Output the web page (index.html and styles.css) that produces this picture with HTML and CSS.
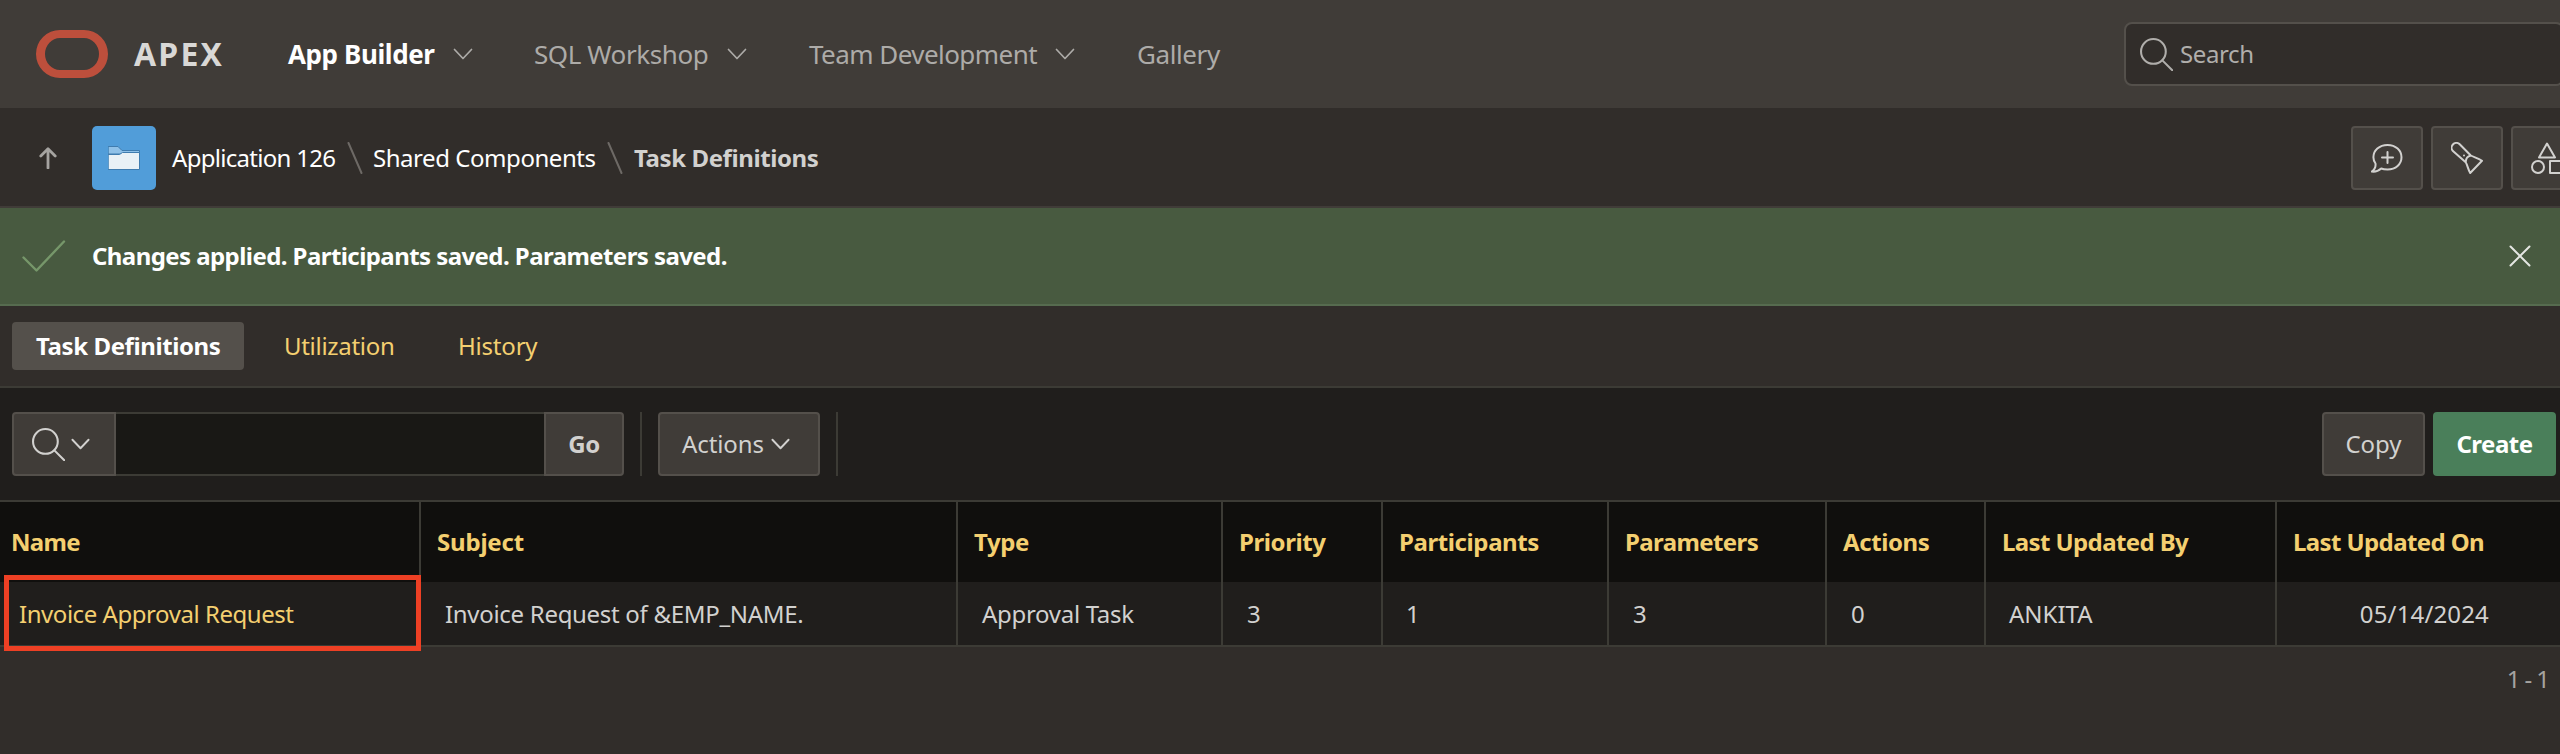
FILE: index.html
```
<!DOCTYPE html>
<html lang="en">
<head>
<meta charset="utf-8">
<title>Task Definitions</title>
<link rel="stylesheet" href="styles.css">
</head>
<body>
<header class="header">
  <div class="logo"></div>
  <div class="brand">APEX</div>
  <nav class="nav">
    <a class="nav-item nav-app current">App Builder <svg class="chev" viewBox="0 0 20 12"><path d="M1.5 1.5 10 10.5 18.5 1.5"/></svg></a>
    <a class="nav-item nav-sql">SQL Workshop <svg class="chev" viewBox="0 0 20 12"><path d="M1.5 1.5 10 10.5 18.5 1.5"/></svg></a>
    <a class="nav-item nav-team">Team Development <svg class="chev" viewBox="0 0 20 12"><path d="M1.5 1.5 10 10.5 18.5 1.5"/></svg></a>
    <a class="nav-item">Gallery</a>
  </nav>
  <div class="search">
    <svg class="magnifier" viewBox="0 0 32 32"><circle cx="13" cy="13" r="12"/><path d="M21.7 21.7 31.3 31.3"/></svg>
    <span>Search</span>
  </div>
</header>

<div class="crumbs">
  <svg class="up" viewBox="0 0 18 22"><path d="M9 21V2M1.8 9 9 1.8 16.2 9"/></svg>
  <div class="tile">
    <svg class="folder" viewBox="0 0 32 24"><path class="folder-back" d="M.5.5H10L14 4.500H31.500V8H.5Z"/><path class="folder-front" d="M.5 8.500H11.500L14.500 6.500H31.500V23.500H.5Z"/></svg>
  </div>
  <a class="crumb crumb-app">Application 126</a>
  <svg class="slash" viewBox="0 0 16 32"><path d="M1.500 1 14.500 31"/></svg>
  <a class="crumb crumb-shared">Shared Components</a>
  <svg class="slash" viewBox="0 0 16 32"><path d="M1.500 1 14.500 31"/></svg>
  <b class="crumb crumb-last">Task Definitions</b>
  <div class="tools">
    <button class="tool"><svg viewBox="0 0 32 32"><path d="M16.500 3C24.800 3 30.500 8.500 30.500 15.300S24.800 27.500 16.500 27.500C14 27.500 12 27.200 10.200 26.500 7.500 29 4 30 .8 29.600 3.800 27.500 5 25.500 4.500 21.500 3 19.500 2.400 17.500 2.400 15.300 2.400 8.500 8.200 3 16.500 3ZM16.500 10V21M11 15.500H22"/></svg></button>
    <button class="tool"><svg viewBox="0 0 32 32"><path d="M2.200 9.300A4.200 4.200 0 0 1 8.700 2.200L19.800 13.500C23 15.300 27 16 31 18.800L19.200 31C17 27.500 16.500 23 14.700 20.300ZM14.700 20.300C14.800 16.500 16 14.200 19.800 13.500"/><circle class="dot" cx="13" cy="13.500" r="1"/></svg></button>
    <button class="tool"><svg viewBox="0 0 32 32"><path d="M16 1.500 24 15.500H8ZM19 19H32V31H19Z"/><circle cx="7" cy="25" r="6"/></svg></button>
  </div>
</div>

<div class="alert">
  <svg class="check" viewBox="0 0 44 32"><path d="M1.500 17.500 14.500 30.500 42 1.500"/></svg>
  <span class="alert-text">Changes applied. Participants saved. Parameters saved.</span>
  <svg class="close" viewBox="0 0 22 22"><path d="M1.500 1.500 20.500 20.500M20.500 1.500 1.500 20.500"/></svg>
</div>

<div class="tabs">
  <a class="tab active">Task Definitions</a>
  <a class="tab tab-util">Utilization</a>
  <a class="tab tab-history">History</a>
</div>

<div class="toolbar">
  <button class="btn find"><svg class="magnifier" viewBox="0 0 32 32"><circle cx="13" cy="13" r="12"/><path d="M21.700 21.700 31.300 31.300"/></svg><svg class="chev" viewBox="0 0 20 12"><path d="M1.500 1.500 10 10.500 18.500 1.500"/></svg></button>
  <input class="field" type="text" aria-label="Search rows">
  <button class="btn go">Go</button>
  <i class="divider"></i>
  <button class="btn actions">Actions<svg class="chev" viewBox="0 0 20 12"><path d="M1.500 1.500 10 10.500 18.500 1.500"/></svg></button>
  <i class="divider"></i>
  <button class="btn copy">Copy</button>
  <button class="btn create">Create</button>
</div>

<div class="grid head">
  <div class="cell">Name</div><div class="cell wide">Subject</div><div class="cell">Type</div><div class="cell">Priority</div><div class="cell">Participants</div><div class="cell tight">Parameters</div><div class="cell">Actions</div><div class="cell tight">Last Updated By</div><div class="cell tight">Last Updated On</div>
</div>
<div class="grid row">
  <div class="cell link">Invoice Approval Request<span class="marker"></span></div><div class="cell">Invoice Request of &amp;EMP_NAME.</div><div class="cell">Approval Task</div><div class="cell">3</div><div class="cell digit">1</div><div class="cell">3</div><div class="cell">0</div><div class="cell wide">ANKITA</div><div class="cell date">05/14/2024</div>
</div>
<div class="pager">1 - 1</div>
</body>
</html>
```
FILE: styles.css
```
* { box-sizing: border-box; }

body {
  margin: 0;
  width: 2560px;
  height: 754px;
  overflow: hidden;
  background: #312d2a;
  color: #d2d1cf;
  font: 24px/32px "Noto Sans", sans-serif;
  letter-spacing: -0.4px;
  white-space: nowrap;
}

svg {
  display: block;
  flex: none;
  fill: none;
  stroke: currentColor;
  stroke-width: 2;
  stroke-linecap: round;
  stroke-linejoin: round;
}

button, input {
  margin: 0;
  padding: 0;
  border: 0;
  font: inherit;
  letter-spacing: inherit;
  color: inherit;
}

/* Header */
.header {
  display: flex;
  align-items: center;
  height: 108px;
  padding-left: 36px;
  background: #403c38;
  overflow: hidden;
}
.logo {
  width: 72px;
  height: 48px;
  border: 8px solid #bd4f3c;
  border-left-width: 9px;
  border-right-width: 9px;
  border-radius: 24px;
}
.brand {
  width: 154px;
  margin-left: 26px;
  font-size: 32px;
  font-weight: 700;
  letter-spacing: 2.2px;
  color: #d9d8d6;
}
.nav { display: flex; font-size: 26px; color: #adaba8; }
.nav-item { display: flex; align-items: center; justify-content: space-between; letter-spacing: -0.4px; }
.chev { width: 20px; height: 12px; }
.nav .chev { color: #adaba8; stroke-width: 1.7; }
.nav-app { width: 185px; margin-right: 61px; }
.nav-sql { width: 213px; margin-right: 62px; }
.nav-team { width: 266px; margin-right: 62px; letter-spacing: -0.55px; }
.current { font-weight: 700; color: #fff; }
.search {
  display: flex;
  align-items: center;
  flex: none;
  gap: 7px;
  width: 440px;
  height: 64px;
  margin-left: auto;
  margin-right: -4px;
  padding-left: 14px;
  border: 2px solid #54504b;
  border-radius: 8px;
  background: #312d2a;
  color: #b0aeab;
  letter-spacing: -0.4px;
}
.magnifier { width: 33px; height: 33px; }

/* Breadcrumb */
.crumbs {
  display: flex;
  align-items: center;
  height: 100px;
  padding: 2px 0 0 39px;
  border-bottom: 2px solid #403c38;
  overflow: hidden;
}
.up { width: 18px; height: 22px; color: #a5a3a0; stroke-width: 2.8; }
.tile {
  display: flex;
  align-items: center;
  justify-content: center;
  width: 64px;
  height: 64px;
  margin: 0 16px 0 35px;
  border-radius: 5px;
  background: #519dd9;
}
.folder { width: 32px; height: 24px; stroke: #3f7caf; stroke-width: 1; stroke-linejoin: miter; }
.folder-back { fill: #8fc1e8; }
.folder-front { fill: #e9f1f6; }
.crumb { color: #fff; }
.crumb-app { width: 175px; letter-spacing: -0.7px; }
.crumb-shared { width: 234px; margin-left: 10px; letter-spacing: -0.45px; }
.crumb-last { margin-left: 11px; color: #d2d1cf; }
.slash { width: 16px; height: 32px; color: #6d6965; }
.tools { display: flex; gap: 8px; margin-left: auto; margin-right: -23px; }
.tool {
  display: flex;
  align-items: center;
  justify-content: center;
  width: 72px;
  height: 64px;
  border: 2px solid #54504b;
  border-radius: 4px;
  background: #403c38;
}
.tool svg { width: 32px; height: 32px; }
.dot { fill: currentColor; stroke: none; }

/* Success message */
.alert {
  display: flex;
  align-items: center;
  height: 98px;
  padding: 0 29px 0 22px;
  border-bottom: 2px solid #566b4f;
  background: #485a40;
}
.check { width: 44px; height: 32px; color: #76976a; stroke-width: 2.4; }
.alert-text { margin-left: 26px; font-weight: 700; color: #fff; letter-spacing: -0.57px; }
.close { width: 22px; height: 22px; margin-left: auto; color: #e4e6e2; }

/* Tabs */
.tabs {
  display: flex;
  align-items: center;
  height: 82px;
  padding-left: 12px;
  border-bottom: 2px solid #3c3b35;
  color: #f4cf70;
}
.tab { line-height: 48px; }
.active { width: 232px; margin-right: 40px; padding-left: 24px; border-radius: 4px; background: #54504b; color: #fff; font-weight: 700; }
.tab-util { width: 174px; letter-spacing: -0.3px; }
.tab-history { letter-spacing: -0.2px; }

/* Report toolbar */
.toolbar {
  display: flex;
  align-items: center;
  height: 114px;
  padding: 0 4px 0 12px;
  border-bottom: 2px solid #3c3b35;
  background: #201e1c;
  letter-spacing: 0;
}
.btn {
  display: flex;
  align-items: center;
  justify-content: center;
  height: 64px;
  border: 2px solid #54504b;
  border-radius: 4px;
  background: #403c38;
}
.find { width: 104px; gap: 6px; padding-right: 6px; border-radius: 4px 0 0 4px; }
.field { width: 428px; height: 64px; border: solid #3c3b35; border-width: 2px 0; background: #191815; }
.go { width: 80px; border-radius: 0 4px 4px 0; font-weight: 700; letter-spacing: -0.4px; }
.divider { width: 2px; height: 64px; margin: 0 16px; background: #3c3b35; }
.actions { width: 162px; gap: 7px; padding-right: 6px; letter-spacing: -0.1px; }
.btn .chev { width: 19px; height: 12px; }
.copy { width: 103px; margin-left: auto; }
.create { width: 123px; margin-left: 8px; border-color: #4a7f5a; background: #4a7f5a; color: #fff; font-weight: 700; letter-spacing: -0.5px; }

/* Report */
.grid { display: grid; grid-template-columns: 421px 537px 265px 160px 226px 218px 159px 291px 283px; }
.cell { position: relative; border-right: 2px solid #3c3b35; }
.cell:last-child { border-right: 0; }
.head { background: #100f0d; color: #f4cf70; font-weight: 700; }
.head .cell { padding-left: 16px; line-height: 80px; }
.head .cell:first-child { padding-left: 11px; letter-spacing: -0.7px; }
.head .wide { letter-spacing: -0.2px; }
.head .tight { letter-spacing: -0.6px; }
.row { height: 65px; border-bottom: 2px solid #3c3b35; background: #201e1c; }
.row .cell { padding-left: 24px; line-height: 64px; letter-spacing: -0.3px; }
.row .digit { padding-left: 23px; }
.row .wide { padding-left: 23px; letter-spacing: 0; }
.row .link { padding-left: 19px; color: #f4cf70; letter-spacing: -0.45px; }
.row .date { padding: 0 71px 0 0; text-align: right; letter-spacing: 0.15px; }
.marker { position: absolute; left: 4px; top: -7px; width: 417px; height: 76px; border: 5px solid #ee4024; z-index: 1; }
.pager { padding: 16px 11px 0 0; text-align: right; color: #a5a3a0; letter-spacing: -1.1px; }
```
